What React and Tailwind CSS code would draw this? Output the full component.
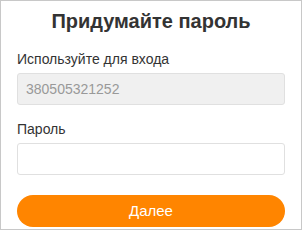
export default function App() {
  return (
    <div
      className="w-[302px] h-[230px] border border-[#c8c8c8] bg-white px-4 pt-2 text-[#333]"
      style={{ fontFamily: '"Liberation Sans", Arial, sans-serif' }}
    >
      <h1 className="text-center text-[20px] leading-[24px] font-bold text-[#333]">
        Придумайте пароль
      </h1>

      <label className="mt-4 block text-[14px] leading-[20px]">Используйте для входа</label>
      <div className="mt-1 flex h-8 items-center rounded-[3px] border border-[#e0e0e0] bg-[#f0f0f0] px-2 text-[14px] text-[#999]">
        380505321252
      </div>

      <label className="mt-[14px] block text-[14px] leading-[20px]">Пароль</label>
      <input
        type="password"
        className="mt-1 block h-8 w-full rounded-[3px] border border-[#e0e0e0] bg-white px-2 text-[14px] outline-none"
      />

      <button className="mt-5 flex h-8 w-full items-center justify-center rounded-full bg-[#ff8500] text-[15px] text-white">
        Далее
      </button>
    </div>
  );
}
